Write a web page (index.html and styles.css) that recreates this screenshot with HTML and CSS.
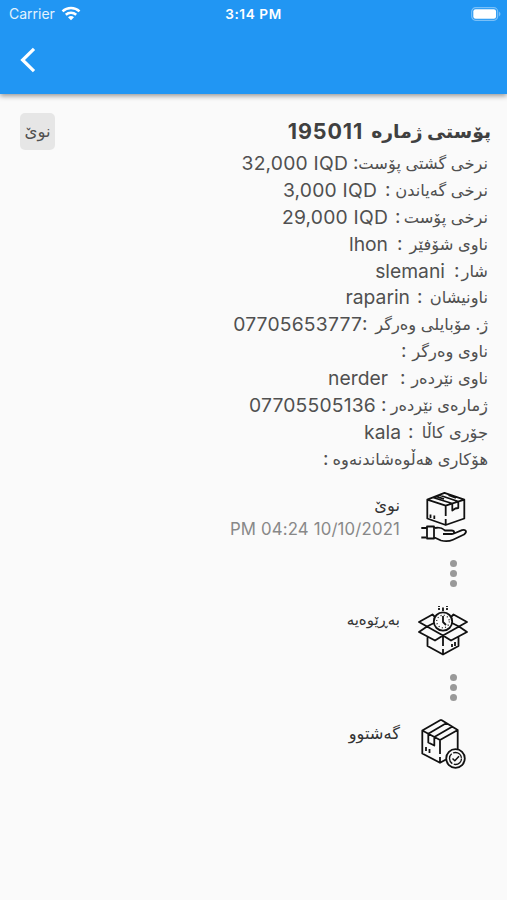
FILE: index.html
```html
<!DOCTYPE html>
<html lang="ckb">

<head>
    <meta charset="utf-8">
    <meta name="viewport" content="width=device-width">
    <title>پۆستی ژمارە 195011</title>
    <link rel="stylesheet" href="styles.css">
</head>

<body>
    <header class="appbar">
        <div class="status">
            <div class="carrier">
                <span>Carrier</span>
                <svg class="wifi" width="20" height="15" viewBox="0 0 20 15" fill="none" stroke="#fff" stroke-width="2.5">
                    <path d="M1.5 5.3C6.3 .8 13.7 .8 18.5 5.3"/>
                    <path d="M4.8 8.7C7.8 6 12.2 6 15.2 8.7"/>
                    <path d="M7 11.2C8.7 9.5 11.3 9.5 13 11.2L10 14.2Z" fill="#fff" stroke="none"/>
                </svg>
            </div>
            <span class="clock">3:14 PM</span>
            <svg class="battery" width="30" height="14" viewBox="0 0 30 14">
                <rect x=".7" y=".7" width="26" height="12.6" rx="4" fill="none" stroke="#fff" stroke-opacity=".4" stroke-width="1.2"/>
                <rect x="2.3" y="2.3" width="22.8" height="9.4" rx="2.3" fill="#fff"/>
                <path d="M28 4.6Q31 7 28 9.4Z" fill="#fff" fill-opacity=".4"/>
            </svg>
        </div>
        <svg class="back" width="16" height="26" viewBox="0 0 16 26" fill="none" stroke="#fff" stroke-width="3.2">
            <path d="M14 1.8L2.6 13L14 24.2"/>
        </svg>
    </header>

    <main class="post" dir="rtl">
        <div class="top">
            <h1 class="title"><span class="ku">پۆستی ژمارە</span> <span>195011</span></h1>
            <span class="badge">نوێ</span>
        </div>

        <div class="details">
            <div class="row total"><div class="label"><span>نرخی گشتی پۆست</span><i>:</i></div><span class="value number" dir="ltr">32,000 IQD</span></div>
            <div class="row delivery"><div class="label"><span>نرخی گەیاندن</span><i>:</i></div><span class="value number" dir="ltr">3,000 IQD</span></div>
            <div class="row price"><div class="label"><span>نرخی پۆست</span><i>:</i></div><span class="value number" dir="ltr">29,000 IQD</span></div>
            <div class="row driver"><div class="label"><span>ناوی شۆفێر</span><i>:</i></div><span class="value">lhon</span></div>
            <div class="row city"><div class="label"><span>شار</span><i>:</i></div><span class="value">slemani</span></div>
            <div class="row address"><div class="label"><span>ناونیشان</span><i>:</i></div><span class="value">raparin</span></div>
            <div class="row phone"><div class="label"><span>ژ. مۆبایلی وەرگر</span><i>:</i></div><span class="value number">07705653777</span></div>
            <div class="row receiver"><div class="label"><span>ناوی وەرگر</span><i>:</i></div></div>
            <div class="row sender"><div class="label"><span>ناوی نێردەر</span><i>:</i></div><span class="value">nerder</span></div>
            <div class="row sender-phone"><div class="label"><span>ژمارەی نێردەر</span><i>:</i></div><span class="value number">07705505136</span></div>
            <div class="row kind"><div class="label"><span>جۆری کاڵا</span><i>:</i></div><span class="value">kala</span></div>
            <div class="row reason"><div class="label"><span>هۆکاری هەڵوەشاندنەوە</span><i>:</i></div></div>
        </div>

        <div class="steps">
            <div class="step">
                <!-- box on a hand -->
                <svg class="icon" width="50" height="54" viewBox="0 0 50 54">
                    <path d="M9.300 9.700L26.500 2.800L46.300 9.700V28.500L27.700 35L9.300 28.500Z M9.300 9.700L27.700 15.700L46.300 9.700 M27.700 15.700V26 M27.700 29V35 M15 7.500L34.300 13.500V20.500L37.300 18.500L40.300 18V11.500L21 5 M18 6.300L26 9 M30 5L38 7.800 M12.500 24.500V28 M16.300 25.500V29"/>
                    <path d="M3.300 38H9 M3.300 47.500H8 M9 36.500H16V48.500H9Z M17 38C22 37 24 38 27 40.500H33.500C37 40.500 37 44 33.500 44H25 M36 43.500L44 40.200C48 39 49.500 42 46 44.500L35 49.700C31 51.500 27 51.500 23 50.500L16.500 47.500"/>
                </svg>
                <div class="info">
                    <div class="name">نوێ</div>
                    <div class="date" dir="ltr">PM 04:24 10/10/2021</div>
                </div>
            </div>
            <div class="dots"><i></i><i></i><i></i></div>
            <div class="step">
                <!-- open box with a timer -->
                <svg class="icon" width="50" height="54" viewBox="0 0 50 54">
                    <g transform="translate(0 2)">
                        <path d="M17 11L14.500 8.500L1 16L9 20.500L1 26L17 34.500L25 29.500L33 34.500L49 26L41 20.500L49 16L35.500 8.500L33 11 M9 20.500L18 16 M41 20.500L32 16 M9 20.500L25 29.500L41 20.500 M9.500 31V40L25 48.500L40.500 40V31 M25 30V40 M25 43V48 M34 38V41 M37 36V40"/>
                        <circle cx="25" cy="15.500" r="9.200" fill="#fafafa"/>
                        <path d="M25 10V16L28 19 M21 2V4 M25 1.500V5 M29 2V4 M21 0V1 M29 0V1"/>
                        <circle cx="25" cy="15.500" r="6.300" stroke-width="1.200" stroke-dasharray="1 2.300"/>
                    </g>
                </svg>
                <div class="info">
                    <div class="name long">بەڕێوەیە</div>
                </div>
            </div>
            <div class="dots"><i></i><i></i><i></i></div>
            <div class="step">
                <!-- box with a check mark -->
                <svg class="icon" width="50" height="54" viewBox="0 0 50 54">
                    <path d="M23 1.800L39.700 12V31 M23 1.800L4.300 12.500V35.500L22 44.800L28 41.500 M4.300 12.500L22 22L39.700 12 M22 22V36 M22 39V44 M10.300 15.700L28.500 5 M16.300 19L34.500 8.500 M10.300 16V24.500L16.300 27.500V19 M8 29V33 M11.500 31V35"/>
                    <circle cx="37.500" cy="40.500" r="9.300" fill="#fafafa"/>
                    <circle cx="37.500" cy="40.500" r="6" stroke-width="1.300" stroke-dasharray="11 1.500"/>
                    <path d="M34.500 40.500L36.800 42.800L41 38.300" stroke-width="1.500"/>
                </svg>
                <div class="info">
                    <div class="name">گەشتوو</div>
                </div>
            </div>
        </div>
    </main>
</body>

</html>
```
FILE: styles.css
```css
body {
    margin: 0;
    min-height: 900px;
    background-color: #fafafa;
    color: #505050;
    font-family: Inter, "DejaVu Sans", sans-serif;
}

/* app bar */
.appbar {
    height: 94px;
    background-color: #2196f3;
    box-shadow: 0 2px 5px rgba(0, 0, 0, .4);
    color: #fff;
}

.status {
    display: grid;
    grid-template-columns: 1fr auto 1fr;
    align-items: center;
    height: 27px;
    padding: 0 6px 0 9px;
    font-size: 14px;
}

.carrier {
    display: flex;
    align-items: center;
    gap: 6px;
    color: #e3f2fd;
}

.clock {
    margin-right: 3px;
    font-weight: 600;
    font-size: 13.6px;
    letter-spacing: .6px;
}

.battery {
    justify-self: end;
}

.back {
    display: block;
    margin: 20px 0 0 20px;
}

/* post details */
.post {
    padding: 19px 19px 0 20px;
}

.top {
    display: flex;
    justify-content: space-between;
    height: 37px;
}

.title {
    display: flex;
    gap: 8px;
    margin: 0;
    margin-right: -3px;
    color: #404040;
    font-size: 21.5px;
    letter-spacing: .9px;
    line-height: 37px;
}

.ku {
    font-size: 18.8px;
    letter-spacing: 0;
}

.badge {
    width: 35px;
    height: 37px;
    border-radius: 5px;
    background-color: #e6e6e6;
    font-size: 16.5px;
    line-height: 37px;
    text-align: center;
}

.row {
    display: flex;
    height: 26.9px;
    line-height: 26.9px;
}

.label {
    display: flex;
    justify-content: space-between;
    margin-left: 7px;
    font-size: 16.3px;
    white-space: nowrap;
}

.label i {
    font-style: normal;
    font-size: 19px;
}

.value {
    font-size: 19.3px;
}

.number {
    letter-spacing: .2px;
}

.total .label { width: 135px; margin-left: 5px; }
.delivery .label { width: 103px; margin-left: 8px; }
.price .label { width: 93px; }
.driver .label { width: 91px; margin-left: 9px; }
.city .label { width: 34px; margin-left: 9px; }
.address .label { width: 71px; }
.phone .label { width: 126px; margin-left: 0; }
.receiver .label { width: 87px; }
.sender .label { width: 88px; margin-left: 12px; }
.sender-phone .label { width: 107px; margin-left: 5px; }
.kind .label { width: 80px; }
.reason .label { width: 165px; }

/* delivery steps */
.steps {
    padding: 17px 20px 0 0;
}

.step {
    display: flex;
    gap: 18px;
    height: 65px;
}

.icon {
    fill: none;
    stroke: #111;
    stroke-width: 1.8;
    stroke-linejoin: round;
}

.info {
    padding-top: 4px;
}

.name {
    height: 23px;
    color: #333;
    font-size: 16.3px;
    line-height: 23px;
}

.long {
    font-size: 15px;
}

.date {
    color: #888;
    font-size: 16.8px;
    letter-spacing: .15px;
    line-height: 25px;
}

.dots {
    display: flex;
    flex-direction: column;
    align-items: center;
    gap: 3px;
    width: 7px;
    height: 44px;
    padding: 5px 11px 0 0;
    box-sizing: content-box;
}

.dots i {
    width: 7px;
    height: 7px;
    border-radius: 50%;
    background-color: #999;
}
```
